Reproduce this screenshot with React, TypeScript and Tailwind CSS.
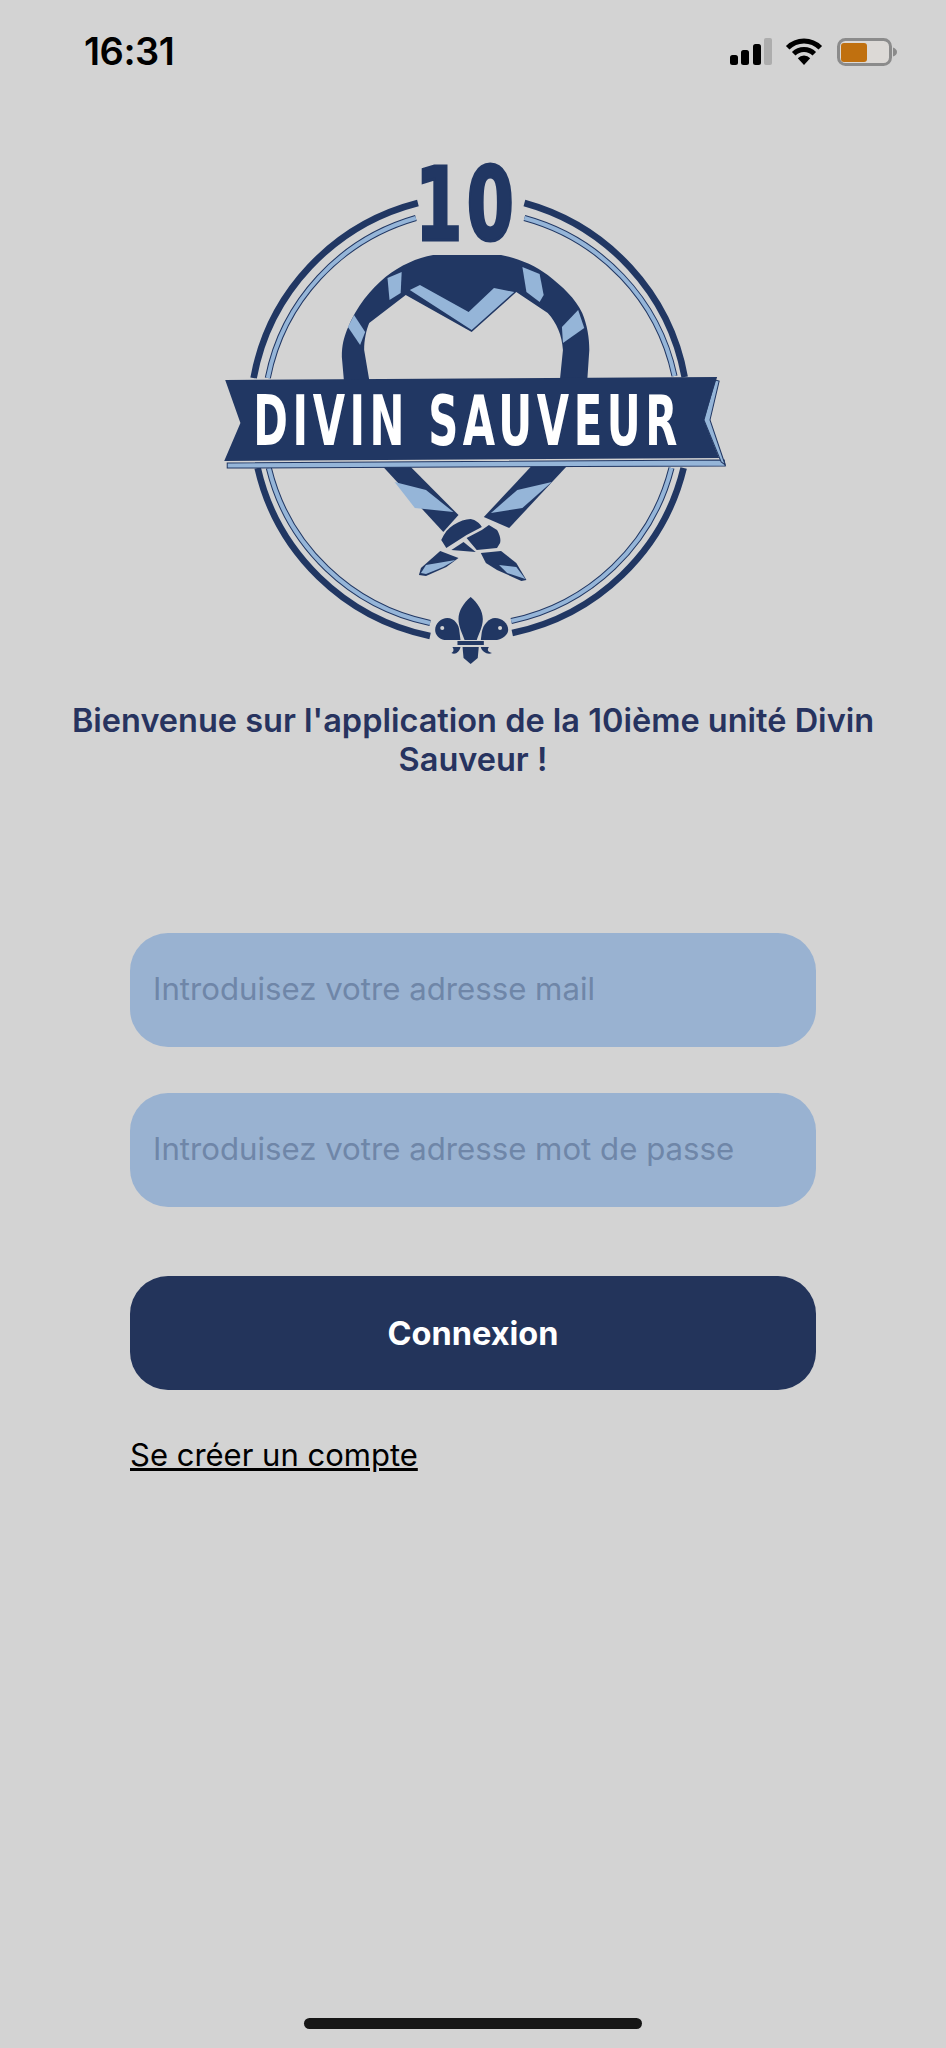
import React from 'react';

const DARK = '#213763';
const LIGHT = '#95b5d8';

const StatusBar = () => (
  <div className="flex items-center justify-between h-[27px] mt-[38px] pl-[84px] pr-[49px]">
    <span className="text-[38px] leading-[27px] font-semibold text-black font-['Inter',sans-serif] tracking-[-0.5px]">16:31</span>
    <div className="flex items-center">
      <svg width="42" height="27" viewBox="0 0 42 27">
        <rect x="0" y="17" width="8" height="10" rx="2.5" fill="#000" />
        <rect x="11" y="12" width="8" height="15" rx="2.5" fill="#000" />
        <rect x="23" y="6" width="8" height="21" rx="2.5" fill="#000" />
        <rect x="34" y="0" width="8" height="27" rx="2" fill="#adadad" />
      </svg>
      <svg className="ml-[13px]" width="38" height="27" viewBox="0 0 38 27" fill="none">
        <path d="M2.7 9.7A23 23 0 0 1 35.3 9.7" stroke="#000" strokeWidth="5" />
        <path d="M8.7 15.7A14.5 14.5 0 0 1 29.3 15.7" stroke="#000" strokeWidth="5" />
        <path d="M19 27L12.8 20.3A8.5 8.5 0 0 1 25.2 20.3Z" fill="#000" />
      </svg>
      <svg className="ml-[14px]" width="60" height="28" viewBox="0 0 60 28">
        <rect x="1.5" y="1.5" width="52" height="25" rx="7" fill="#dcd9d6" stroke="#8b8b8b" strokeWidth="3" />
        <rect x="4" y="5" width="26" height="19" rx="3" fill="#c0700f" />
        <path d="M56 9.5C58.5 10.5 60 12 60 14S58.5 17.5 56 18.5Z" fill="#8b8b8b" />
      </svg>
    </div>
  </div>
);

// drawn in crop coordinates, so the viewBox is slightly stretched on x
const Logo = () => (
  <svg className="block ml-[210px] mt-[60px]" width="528" height="550" viewBox="210 125 520.6 550" preserveAspectRatio="none">
    {/* outer ring */}
    <g fill="none" stroke={DARK} strokeWidth="6.5">
      <path d="M415 203A221 221 0 0 0 253 378" />
      <path d="M520 203A221 221 0 0 1 678 377" />
      <path d="M257 468A221 221 0 0 0 427 636" />
      <path d="M508 633A221 221 0 0 0 677 468" />
    </g>
    {/* inner ring */}
    <g fill="none" stroke={DARK} strokeWidth="6">
      <path d="M413 218A208 208 0 0 0 267 378" />
      <path d="M520 218A208 208 0 0 1 668 376" />
      <path d="M268 468A208 208 0 0 0 427 623" />
      <path d="M507 621A208 208 0 0 0 665 468" />
    </g>
    <g fill="none" stroke={LIGHT} strokeWidth="4">
      <path d="M413 218A208 208 0 0 0 267 378" />
      <path d="M520 218A208 208 0 0 1 668 376" />
      <path d="M268 468A208 208 0 0 0 427 623" />
      <path d="M507 621A208 208 0 0 0 665 468" />
    </g>

    {/* the number */}
    <g transform="translate(463 240) scale(0.66 1)">
      <text x="0" y="0" textAnchor="middle" letterSpacing="6" fontFamily="'DejaVu Sans',sans-serif" fontWeight="700" fontSize="102" fill={DARK} stroke={DARK} strokeWidth="3">10</text>
    </g>

    {/* neckerchief */}
    <path d="M342 380L340 357C340 345 342 338 345 330C355 305 368 290 383 277C398 265 414 258 430 255L497 255C513 258 530 265 543 275C558 287 570 298 577 313C582 325 584 338 584 350L582 380L555 380L558 350C557 335 552 323 543 313L512 292L468 332L403 295L367 323C364 330 362 340 362 350L367 380Z" fill={DARK} />
    <path d="M407 290L417 285L465 312L490 288L510 292L468 330Z" fill={LIGHT} />
    <path d="M385 278L399 272L398 293L387 300Z" fill={LIGHT} />
    <path d="M346 327L352 315L363 332L358 345Z" fill={LIGHT} />
    <path d="M518 267L535 274L539 295L535 302L522 292Z" fill={LIGHT} />
    <path d="M557 327L573 310L579 328L558 343Z" fill={LIGHT} />

    {/* lower ends and knot */}
    <path d="M380 466L407 466L455 515L440 532Z" fill={DARK} />
    <path d="M392 482L423 490L450 512L412 508Z" fill={LIGHT} />
    <path d="M527 466L562 466L505 528L480 517Z" fill={DARK} />
    <path d="M547 482L513 490L487 513L518 508Z" fill={LIGHT} />
    <path d="M438 540C441 533 445 528 450 525C456 521 462 519 467 519C472 520 476 523 478 527L463 535L443 548Z" fill={DARK} />
    <path d="M485 525L493 530C496 535 497 540 496 543L493 548L473 550L463 538L478 530Z" fill={DARK} />
    <path d="M448 550L460 542L472 552Z" fill={DARK} />
    <path d="M437 551L455 558L443 567L423 576L416 575L418 568Z" fill={DARK} />
    <path d="M418 573L423 565L452 560L440 567L423 574Z" fill={LIGHT} />
    <path d="M477 553L497 551L512 563L522 580L517 581L493 570L482 563Z" fill={DARK} />
    <path d="M495 565L512 567L521 579L503 573Z" fill={LIGHT} />

    {/* banner */}
    <path d="M227 463L717 460L718 466L227 468Z" fill={LIGHT} stroke={DARK} strokeWidth="1" />
    <path d="M708 380L712 381L703 420L718 465L714 462L697 420Z" fill={LIGHT} stroke={DARK} strokeWidth="1" />
    <path d="M225 380L710 377L697 420L712 458L224 461L240 423Z" fill={DARK} />
    <g transform="translate(464 445) scale(0.6 1)">
      <text x="0" y="0" textAnchor="middle" letterSpacing="7.5" fontFamily="'DejaVu Sans',sans-serif" fontWeight="700" fontSize="68.6" fill="#fff">DIVIN SAUVEUR</text>
    </g>

    {/* fleur de lis */}
    <g fill={DARK}>
      <path d="M467 597C474 603 479 611 479 619C479 627 475 634 473 640L461 640C459 634 455 627 455 619C455 611 460 603 467 597Z" />
      <path d="M457 640L441 640C436 639 432 635 432 630C432 623 438 618 444 618C451 618 456 625 456 632Z" />
      <path d="M477 640L493 640C498 639 504 635 504 630C504 623 498 618 491 618C485 618 479 625 478 632Z" />
      <rect x="454" y="641" width="26" height="4" />
      <path d="M459 647L475 647L474 658L467 664L460 658Z" />
      <path d="M448 653C452 655 456 652 457 647L449 647C451 650 450 652 448 653Z" />
      <path d="M488 653C484 655 478 652 477 647L485 647C483 650 484 652 488 653Z" />
    </g>
    <circle cx="439" cy="628" r="2" fill="#d3d3d3" />
    <circle cx="496" cy="628" r="2" fill="#d3d3d3" />
  </svg>
);

export default function App() {
  return (
    <div className="flex flex-col h-[2048px] w-[946px] bg-[#d3d3d3] font-['Inter',sans-serif] overflow-hidden">
      <StatusBar />
      <Logo />
      <h1 className="mt-[26px] w-[850px] mx-auto text-center text-[32.5px] leading-[39px] font-semibold text-[#27335f]">
        Bienvenue sur l'application de la 10ième unité Divin Sauveur !
      </h1>
      <div className="flex flex-col mt-[154px] ml-[130px] w-[686px]">
        <input
          className="h-[114px] rounded-[38px] bg-[#99b2d1] px-[23px] pb-[3px] text-[31.2px] outline-none placeholder:text-[#6f86a8]"
          placeholder="Introduisez votre adresse mail"
        />
        <input
          className="h-[114px] mt-[46px] rounded-[38px] bg-[#99b2d1] px-[23px] pb-[3px] text-[31.2px] outline-none placeholder:text-[#6f86a8]"
          placeholder="Introduisez votre adresse mot de passe"
        />
        <button className="h-[114px] mt-[69px] pt-[2px] rounded-[38px] bg-[#23345b] text-white text-[32.5px] font-bold">
          Connexion
        </button>
        <a className="self-start mt-[45px] text-[31px] leading-[40px] text-black underline">Se créer un compte</a>
      </div>
      <div className="mt-auto mb-[19px] ml-[304px] w-[338px] h-[11px] rounded-full bg-[#161616]" />
    </div>
  );
}
